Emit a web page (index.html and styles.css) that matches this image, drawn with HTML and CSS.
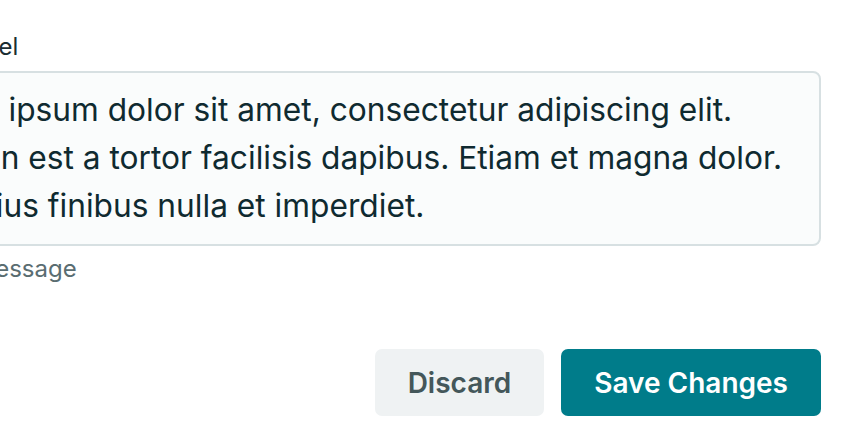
FILE: index.html
```html
<!DOCTYPE html>
<html lang="en">
<head>
    <meta charset="UTF-8">
    <meta name="viewport" content="width=device-width, initial-scale=1.0">
    <title>Edit Message</title>
    <link rel="stylesheet" href="styles.css">
</head>
<body>

    <div class="page">
        <form class="form">

            <!-- Message field -->
            <div class="field">
                <label class="field-label" for="message">Notes label</label>
                <textarea class="field-input" id="message" rows="3">Lorem ipsum dolor sit amet, consectetur adipiscing elit. Aenean est a tortor facilisis dapibus. Etiam et magna dolor. Ut varius finibus nulla et imperdiet.</textarea>
                <div class="field-help">Type a message</div>
            </div>

            <!-- Buttons -->
            <div class="actions">
                <button type="button" class="btn btn-secondary">Discard</button>
                <button type="submit" class="btn btn-primary">Save Changes</button>
            </div>

        </form>
    </div>

</body>
</html>
```

FILE: styles.css
```css
body {
    margin: 0;
    font-family: Inter, "Noto Sans", sans-serif;
    background-color: #ffffff;
    color: #112a30;
    overflow: hidden;
}

.page {
    display: flex;
    justify-content: flex-end;
    padding: 32px 33px 0 0;
}

.form {
    flex: 0 0 930px;
    display: flex;
    flex-direction: column;
}

.field {
    display: flex;
    flex-direction: column;
}

.field-label {
    font-size: 24px;
    line-height: 30px;
    color: #1a2d32;
    margin-bottom: 9px;
}

.field-input {
    box-sizing: border-box;
    height: 175px;
    padding: 13px 6px 13px 12px;
    font-family: inherit;
    font-size: 31.7px;
    line-height: 48px;
    color: #0f2a30;
    background-color: #fafcfc;
    border: 2px solid #d7e0e2;
    border-radius: 8px;
    resize: none;
    outline: none;
}

.field-help {
    margin-top: 8px;
    font-size: 24px;
    line-height: 30px;
    color: #5a6d71;
}

.actions {
    display: flex;
    justify-content: flex-end;
    gap: 17px;
    margin-top: 65px;
}

.btn {
    height: 67px;
    padding: 0 33px;
    font-family: inherit;
    font-size: 28px;
    font-weight: 600;
    border: none;
    border-radius: 7px;
    cursor: pointer;
}

.btn-secondary {
    background-color: #eff2f3;
    color: #44575a;
}

.btn-primary {
    background-color: #007c8a;
    color: #ffffff;
}
```
